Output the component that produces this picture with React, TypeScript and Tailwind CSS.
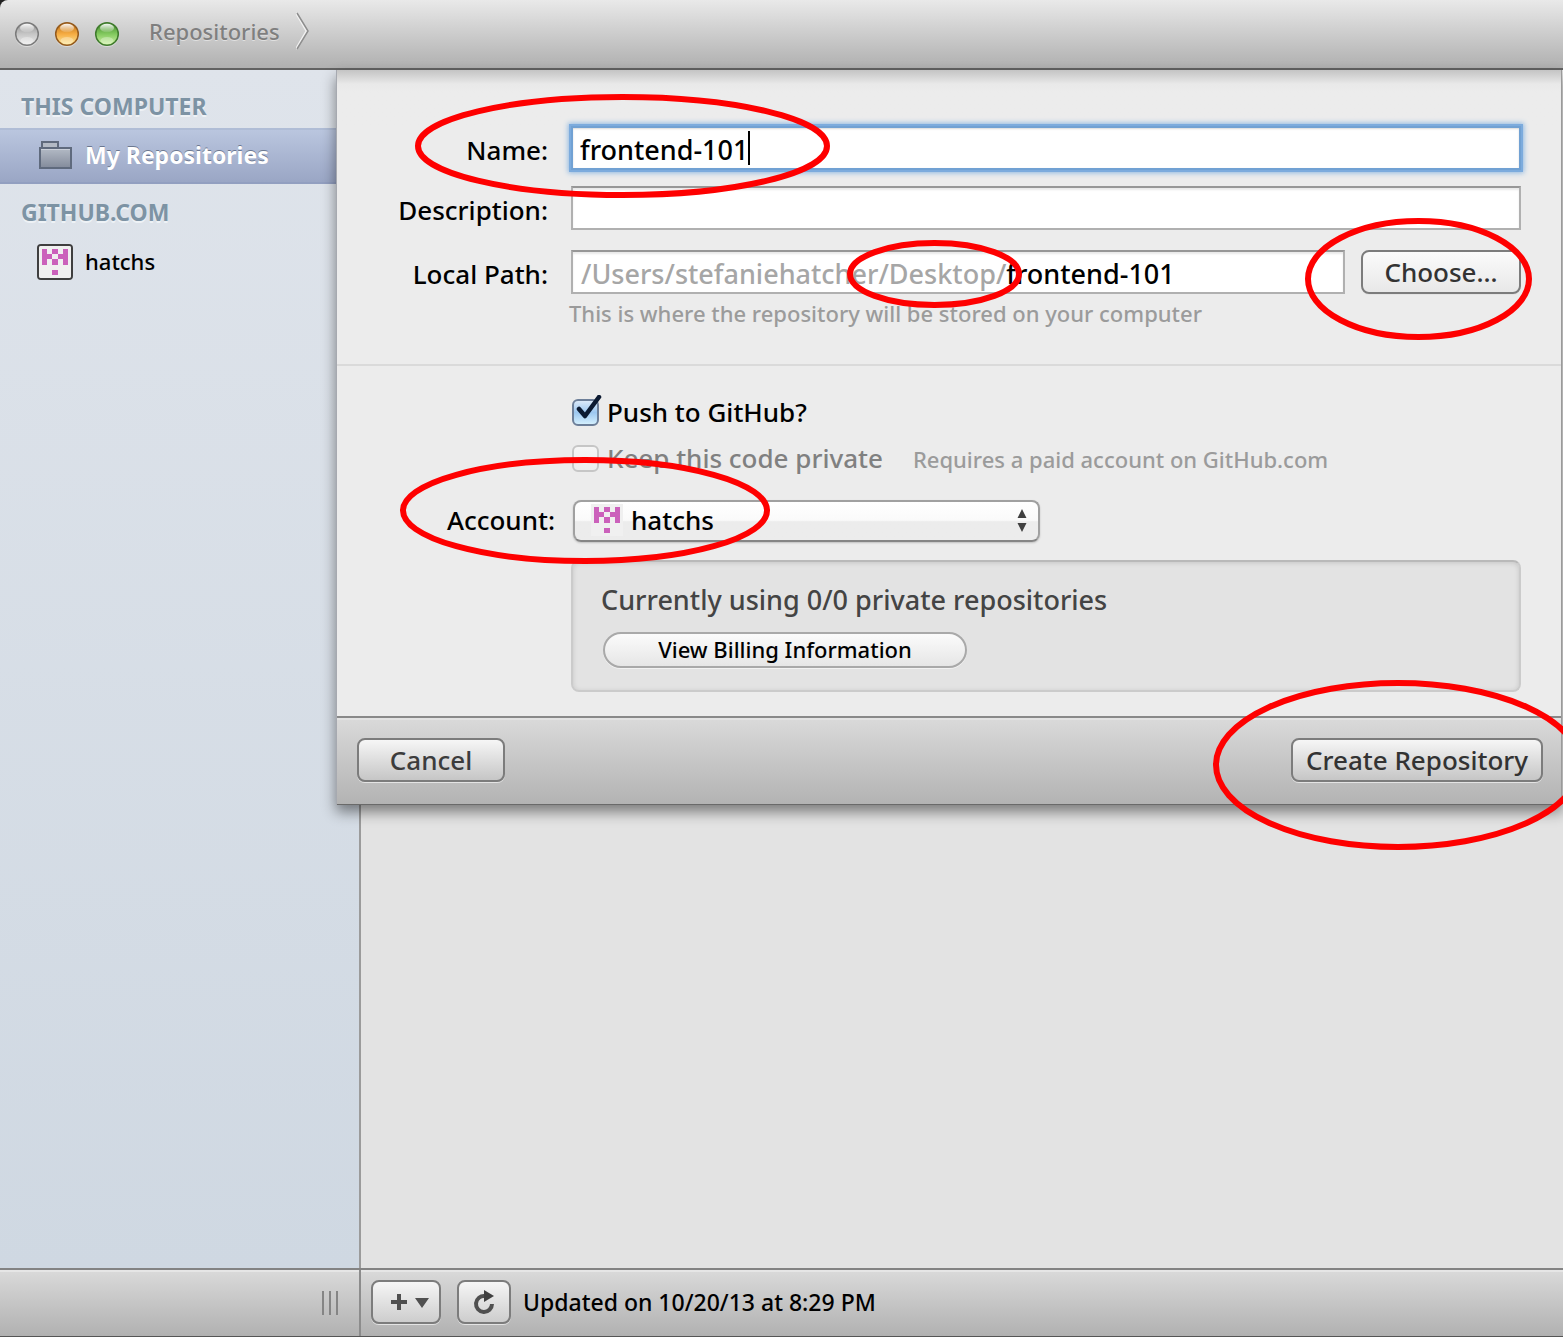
import type { ReactNode } from "react";

function Ring({ className }: { className: string }) {
  return (
    <svg className={`pointer-events-none absolute z-20 overflow-visible ${className}`} aria-hidden="true">
      <ellipse cx="50%" cy="50%" rx="50%" ry="50%" fill="none" stroke="#fe0000" strokeWidth="6" />
    </svg>
  );
}

function Identicon({ className }: { className: string }) {
  return (
    <svg viewBox="0 0 32 32" className={className} shapeRendering="crispEdges" aria-hidden="true">
      <rect width="32" height="32" fill="#f0f0f0" />
      <path
        fill="#cb61bb"
        d="M3 3h5v5h5v5h-5v6H3zM24 3h5v16h-5v-6h-5V8h5zM13 3h6v5h-6zM13 13h6v6h-6zM13 24h6v5h-6z"
      />
    </svg>
  );
}

function TrafficLight({ id, label, rim, dark, mid, light }: Record<"id" | "label" | "rim" | "dark" | "mid" | "light", string>) {
  return (
    <button type="button" aria-label={label} className="size-6">
      <svg viewBox="0 0 24 24" className="size-6 overflow-visible">
        <defs>
          <linearGradient id={`${id}-b`} x1="0" y1="0" x2="0" y2="1">
            <stop offset="0" stopColor={dark} />
            <stop offset="0.5" stopColor={mid} />
            <stop offset="1" stopColor={light} />
          </linearGradient>
          <linearGradient id={`${id}-h`} x1="0" y1="0" x2="0" y2="1">
            <stop offset="0" stopColor="#fff" stopOpacity="0.95" />
            <stop offset="1" stopColor="#fff" stopOpacity="0.1" />
          </linearGradient>
        </defs>
        <circle cx="12" cy="13" r="12" fill="#fff" opacity="0.45" />
        <circle cx="12" cy="12" r="11.3" fill={`url(#${id}-b)`} stroke={rim} strokeWidth="1.5" />
        <ellipse cx="12" cy="6" rx="7" ry="4.2" fill={`url(#${id}-h)`} />
        <ellipse cx="12" cy="18.5" rx="6.5" ry="3.5" fill="#fff" opacity="0.3" />
      </svg>
    </button>
  );
}

function GrayButton({ className, children, label }: { className: string; children: ReactNode; label?: string }) {
  return (
    <button
      type="button"
      aria-label={label}
      className={`flex h-11 items-center justify-center rounded-lg border-2 border-[#7c7c7c] whitespace-nowrap shadow-[0_1px_0_#e4e4e4] ${className}`}
    >
      {children}
    </button>
  );
}

const fieldBox = "h-11 border-2 border-[#b0b0b0] border-t-[#979797] bg-white shadow-[inset_0_2px_2px_#e9e9e9]";
const fieldLabel = "w-[234px] shrink-0 pr-[23px] text-right";

export default function App() {
  return (
    <div className="flex min-h-screen flex-col overflow-hidden bg-[#222] font-['Noto_Sans','Open_Sans',sans-serif] text-[22px] leading-8 font-medium text-black">
      <header className="flex h-[70px] shrink-0 items-center rounded-tl-lg border-b-2 border-[#626262] bg-linear-to-b from-[#e9e9e9] to-[#b0b0b0] pl-[15px]">
        <div className="flex gap-4">
          <TrafficLight id="close" label="Close" rim="#7b7b7b" dark="#8f8f8f" mid="#c6c6c6" light="#ededed" />
          <TrafficLight id="min" label="Minimize" rim="#935a1e" dark="#b86a14" mid="#f6ac42" light="#fdeb9d" />
          <TrafficLight id="zoom" label="Zoom" rim="#3f7a2d" dark="#3c8427" mid="#82c95e" light="#d3f5a8" />
        </div>
        <nav className="ml-[30px] flex items-center gap-4 pb-[6px]" aria-label="Breadcrumb">
          <a href="#repositories" className="text-[#7f7f7f] [text-shadow:0_1px_0_#e0e0e0]">
            Repositories
          </a>
          <svg viewBox="0 0 14 38" className="h-[38px] w-[14px]" fill="none" aria-hidden="true">
            <path d="M0 1 10.500 19 0 37" stroke="#f2f2f2" strokeWidth="2" />
            <path d="M1 1 12 19 1 37" stroke="#8d8d8d" strokeWidth="1.500" />
          </svg>
        </nav>
      </header>

      <div className="relative flex flex-1">
        <aside className="w-[361px] shrink-0 border-r-2 border-[#9b9b9b] bg-linear-to-b from-[#dfe4eb] to-[#cfd8e2]">
          <h2 className="pt-5 pb-[6px] pl-[21px] text-[23px] font-bold text-[#7d93a4] [text-shadow:0_2px_0_#eef2f6]">THIS COMPUTER</h2>
          <a
            href="#my-repositories"
            className="flex h-14 items-center gap-[13px] border-t-2 border-b-2 border-t-[#b0bdd6] border-b-[#929fc0] bg-linear-to-b from-[#bac6df] to-[#9aa6c5] pb-[2px] pl-[39px] text-[23px] font-bold text-white [text-shadow:0_-1px_0_#6c7890]"
          >
            <svg viewBox="0 0 33 30" className="h-[30px] w-[33px]" aria-hidden="true">
              <defs>
                <linearGradient id="folder" x1="0" y1="0" x2="0" y2="1">
                  <stop offset="0" stopColor="#b4bbc6" />
                  <stop offset="1" stopColor="#838b9b" />
                </linearGradient>
              </defs>
              <path d="M3 8V2h16v6" fill="#b3bac5" stroke="#5f6a7d" strokeWidth="2" />
              <path d="M1 8h31v20H1z" fill="url(#folder)" stroke="#5f6a7d" strokeWidth="2" />
              <path d="M2 9.500h29" stroke="#c9cfd9" />
            </svg>
            My Repositories
          </a>
          <h2 className="pt-3 pl-[21px] text-[23px] font-bold text-[#7d93a4] [text-shadow:0_2px_0_#eef2f6]">GITHUB.COM</h2>
          <a href="#hatchs" className="mt-4 flex items-center gap-3 pl-[37px]">
            <span className="size-9 overflow-hidden rounded-sm border-2 border-[#3f3f3f]">
              <Identicon className="size-8" />
            </span>
            <span className="pb-[2px]">hatchs</span>
          </a>
        </aside>
        <main className="flex-1 bg-[#e3e3e3]">
          <form
            aria-label="Create repository"
            className="absolute top-0 right-px left-[336px] border-r border-l border-r-[#9a9a9a] border-l-[#a6a9b0] bg-[#ececec] text-[26px] shadow-[0_7px_13px_#00000075]"
          >
            <div className="h-[56px] bg-linear-to-b from-[#c4c4c4] via-[#e9e9e9] via-25% to-[#ececec] to-40%" />
            <div className="flex h-[60px] pr-10">
              <label htmlFor="name" className={`${fieldLabel} relative pt-2`}>
                Name:
                <Ring className="top-[-29px] left-[81px] h-[98px] w-[409px]" />
              </label>
              <div className="flex h-11 flex-1 items-center border-2 border-[#71a1d3] bg-white pl-[7px] text-[27px] shadow-[0_0_0_2px_#7cabdd,0_0_5px_3px_#8fb8e2,inset_0_1px_2px_#d9d9d9]">
                <input id="name" defaultValue="frontend-101" className="field-sizing-content pt-[3px] caret-transparent outline-none" />
                <span className="h-[34px] w-[2px] bg-black" />
              </div>
            </div>
            <div className="flex h-16 pr-10">
              <label htmlFor="description" className={`${fieldLabel} pt-2`}>
                Description:
              </label>
              <input id="description" className={`${fieldBox} min-w-0 flex-1 px-2 outline-none`} />
            </div>
            <div className="flex h-11 pr-10">
              <label htmlFor="path" className={`${fieldLabel} pt-2`}>
                Local Path:
              </label>
              <div className={`${fieldBox} flex min-w-0 flex-1 items-center pt-1 pl-2 text-[27px]`}>
                <span className="whitespace-pre text-[#a6a6a6]">/Users/stefaniehatcher</span>
                <span className="relative whitespace-pre text-[#a6a6a6]">
                  /Desktop/
                  <Ring className="top-[-15px] left-[-28px] h-[62px] w-[169px]" />
                </span>
                <input id="path" defaultValue="frontend-101" className="min-w-0 flex-1 outline-none" />
              </div>
              <div className="relative ml-4">
                <GrayButton className="w-[160px] bg-linear-to-b from-[#fbfbfb] to-[#e8e8e8] text-[#333]">Choose…</GrayButton>
                <Ring className="top-[-29px] left-[-53px] h-[116px] w-[221px]" />
              </div>
            </div>
            <p className="pt-[3px] pl-[232px] text-[22px] text-[#9b9b9b]">This is where the repository will be stored on your computer</p>
            <hr className="mt-[35px] border-t-2 border-[#dadada]" />

            <div className="pt-[30px] pl-[235px]">
              <div className="flex items-center">
                <span className="relative flex">
                  <input
                    id="push"
                    type="checkbox"
                    defaultChecked
                    className="size-[27px] appearance-none rounded-md border-2 border-[#6d7f99] bg-linear-to-b from-[#dbe9f8] via-[#9cc7f0] to-[#d3effd]"
                  />
                  <svg viewBox="0 0 32 32" className="pointer-events-none absolute -top-1 left-0 size-8" fill="none" aria-hidden="true">
                    <path d="M7 14 13 21 27 2" stroke="#0c1a31" strokeWidth="4.500" strokeLinecap="round" strokeLinejoin="round" />
                  </svg>
                </span>
                <label htmlFor="push" className="pl-2">
                  Push to GitHub?
                </label>
              </div>
              <div className="mt-[13px] flex items-center text-[#808080]">
                <input
                  id="private"
                  type="checkbox"
                  disabled
                  className="size-[27px] appearance-none rounded-md border-2 border-[#c6c6c6] bg-linear-to-b from-[#f6f6f6] to-[#ededed]"
                />
                <label htmlFor="private" className="pl-2">
                  Keep this code private
                </label>
                <span className="pt-[2px] pl-[30px] text-[22px] text-[#9b9b9b]">Requires a paid account on GitHub.com</span>
              </div>
            </div>

            <div className="mt-[25px] flex h-[42px]">
              <label htmlFor="account" className="relative w-[236px] shrink-0 pt-1 pr-[18px] text-right">
                Account:
                <Ring className="top-[-40px] left-[66px] h-[101px] w-[364px]" />
              </label>
              <div className="relative">
                <select
                  id="account"
                  className="h-[42px] w-[467px] appearance-none rounded-lg border-2 border-[#a0a0a0] border-b-[#858585] bg-linear-to-b from-white from-0% via-[#fafafa] via-48% to-[#ececec] to-52% pb-[3px] pl-[56px] shadow-[0_1px_2px_#00000030]"
                >
                  <option>hatchs</option>
                </select>
                <Identicon className="pointer-events-none absolute top-1 left-[18px] size-8" />
                <svg viewBox="0 0 10 24" className="pointer-events-none absolute top-[9px] right-[13px] h-6 w-[10px]" aria-hidden="true">
                  <path d="M5 0 9.500 9H.5zM5 23 9.500 14H.5z" fill="#404040" />
                </svg>
              </div>
            </div>

            <section className="mt-[18px] mr-10 ml-[234px] h-[132px] rounded-lg border-2 border-[#cbcbcb] border-t-[#b9b9b9] bg-[#e3e3e3] pt-[22px] pl-7 shadow-[inset_0_1px_5px_#00000022]">
              <p className="text-[27px] text-[#444]">Currently using 0/0 private repositories</p>
              <button
                type="button"
                className="mt-4 ml-[2px] flex h-9 w-[364px] items-center justify-center rounded-full border-2 border-[#a9a9a9] bg-linear-to-b from-[#fbfbfb] to-[#e6e6e6] pb-[2px] text-[22px] shadow-[0_1px_0_#f2f2f2]"
              >
                View Billing Information
              </button>
            </section>

            <footer className="mt-6 flex h-[89px] justify-between border-t-2 border-b border-t-[#898989] border-b-[#6a6a6a] bg-linear-to-b from-[#dadada] to-[#b3b3b3] pt-5 pr-[18px] pl-5 shadow-[inset_0_2px_0_#e3e3e3]">
              <GrayButton className="w-[148px] bg-linear-to-b from-[#f6f6f6] to-[#c6c6c6] text-[#3c3c3c]">Cancel</GrayButton>
              <div className="relative">
                <GrayButton className="w-[252px] bg-linear-to-b from-[#f6f6f6] to-[#c6c6c6] text-[#333]">Create Repository</GrayButton>
                <Ring className="top-[-55px] left-[-75px] h-[164px] w-[364px]" />
              </div>
            </footer>
          </form>
        </main>
      </div>

      <footer className="flex h-[69px] shrink-0 border-t-2 border-b border-t-[#838383] border-b-[#555] bg-linear-to-b from-[#dadada] to-[#b1b1b1] shadow-[inset_0_2px_0_#e6e6e6]">
        <div className="flex w-[361px] shrink-0 items-center justify-end gap-1 border-r-2 border-[#8c8c8c] pr-[21px]">
          <span className="h-6 w-[2px] bg-[#858585]" />
          <span className="ml-px h-6 w-[2px] bg-[#858585]" />
          <span className="ml-px h-6 w-[2px] bg-[#858585]" />
        </div>
        <div className="flex items-center pb-[2px] pl-[10px]">
          <GrayButton label="Add" className="w-[70px] bg-linear-to-b from-[#f6f6f6] to-[#cdcdcd]">
            <svg viewBox="0 0 48 20" className="h-5 w-12" aria-hidden="true">
              <path d="M15 2h4v6h6v4h-6v6h-4v-6H9V8h6zM33 6h14l-7 10z" fill="#505050" />
            </svg>
          </GrayButton>
          <GrayButton label="Refresh" className="ml-4 w-[54px] bg-linear-to-b from-[#f6f6f6] to-[#cdcdcd]">
            <svg viewBox="0 0 22 26" className="h-[26px] w-[22px]" fill="none" aria-hidden="true">
              <path d="M12 7A8 8 0 1 0 19 15" stroke="#505050" strokeWidth="4" />
              <path d="M11 1 21 7 11 13z" fill="#404040" />
            </svg>
          </GrayButton>
          <p className="pl-3 text-[23px]">Updated on 10/20/13 at 8:29 PM</p>
        </div>
      </footer>
    </div>
  );
}
